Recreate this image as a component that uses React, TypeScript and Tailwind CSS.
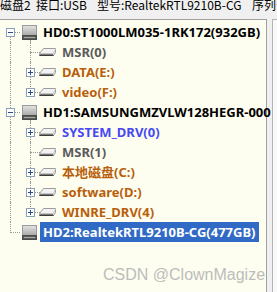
import type { ReactNode } from 'react'

type Line = 'full' | 'top' | 'bottom' | 'none'

type Row = {
  level: 0 | 1
  label: string
  color: string
  box?: '+' | '-'
  root: Line
  child?: Line
  down?: boolean
  selected?: boolean
}

const ORANGE = 'text-[#b85f0c]'
const GREY = 'text-[#5a5a5a]'

const ROWS: Row[] = [
  { level: 0, label: 'HD0:ST1000LM035-1RK172(932GB)', color: 'text-black', box: '-', root: 'bottom', down: true },
  { level: 1, label: 'MSR(0)', color: GREY, root: 'full', child: 'full' },
  { level: 1, label: 'DATA(E:)', color: ORANGE, box: '+', root: 'full', child: 'full' },
  { level: 1, label: 'video(F:)', color: ORANGE, box: '+', root: 'full', child: 'top' },
  { level: 0, label: 'HD1:SAMSUNGMZVLW128HEGR-000', color: 'text-black', box: '-', root: 'full', down: true },
  { level: 1, label: 'SYSTEM_DRV(0)', color: 'text-[#4848f0]', box: '+', root: 'full', child: 'full' },
  { level: 1, label: 'MSR(1)', color: GREY, root: 'full', child: 'full' },
  { level: 1, label: '本地磁盘(C:)', color: ORANGE, box: '+', root: 'full', child: 'full' },
  { level: 1, label: 'software(D:)', color: ORANGE, box: '+', root: 'full', child: 'full' },
  { level: 1, label: 'WINRE_DRV(4)', color: ORANGE, box: '+', root: 'full', child: 'top' },
  { level: 0, label: 'HD2:RealtekRTL9210B-CG(477GB)', color: 'text-black', root: 'top', selected: true },
]

const DOT = 'border-dotted border-[#9a9a9a]'

function ExpandBox({ sign }: { sign: '+' | '-' }) {
  return (
    <svg width="9" height="9" viewBox="0 0 9 9" className="absolute left-[6px] top-[6px]">
      <rect x="0.5" y="0.5" width="8" height="8" fill="#ffffff" stroke="#8ca0b8" />
      <line x1="2" y1="4.5" x2="7" y2="4.5" stroke="#2b4a8a" />
      {sign === '+' && <line x1="4.5" y1="2" x2="4.5" y2="7" stroke="#2b4a8a" />}
    </svg>
  )
}

function Gutter({ v, h, box }: { v: Line; h?: boolean; box?: '+' | '-' }) {
  return (
    <div className="relative w-5 h-5 shrink-0">
      {v === 'full' && <div className={`absolute left-[10px] top-0 bottom-0 border-l ${DOT}`} />}
      {v === 'top' && <div className={`absolute left-[10px] top-0 h-[11px] border-l ${DOT}`} />}
      {v === 'bottom' && <div className={`absolute left-[10px] top-[10px] bottom-0 border-l ${DOT}`} />}
      {h && <div className={`absolute left-[10px] right-0 top-[10px] border-t ${DOT}`} />}
      {box && <ExpandBox sign={box} />}
    </div>
  )
}

function DiskIcon() {
  return (
    <svg width="15" height="15" viewBox="0 0 15 15">
      <defs>
        <linearGradient id="dk" x1="0" y1="0" x2="0" y2="1">
          <stop offset="0" stopColor="#e4e4e4" />
          <stop offset="1" stopColor="#a9a9a9" />
        </linearGradient>
      </defs>
      <rect x="0.5" y="0.5" width="14" height="10" fill="url(#dk)" stroke="#9a9a9a" />
      <rect x="0.5" y="10.5" width="14" height="4" fill="#5e5e5e" stroke="#4a4a4a" />
      <line x1="2" y1="12.5" x2="13" y2="12.5" stroke="#a8a8a8" />
    </svg>
  )
}

function PartIcon() {
  return (
    <svg width="17" height="8" viewBox="0 0 17 8" className="-ml-[1px] shrink-0">
      <path d="M0.5 5.5 L4.5 0.5 L16.5 0.5 L16.5 4.5 L14.5 7.5 L0.5 7.5 Z" fill="#f2f2f2" stroke="#9c9c9c" />
      <path d="M0.5 5.5 L14.5 5.5 L16.5 1" fill="none" stroke="#c4c4c4" />
      <path d="M0.5 7.5 L14.5 7.5" stroke="#3c3c3c" />
      <rect x="1" y="6" width="13" height="1" fill="#7a7a7a" />
    </svg>
  )
}

function TreeRow({ r }: { r: Row }) {
  let icon: ReactNode
  if (r.level === 0) {
    icon = (
      <>
        <Gutter v={r.root} h box={r.box} />
        <div className="relative w-5 h-5 shrink-0 flex items-center pl-[2px]">
          <DiskIcon />
          {r.down && <div className={`absolute left-[10px] top-[18px] bottom-0 border-l ${DOT}`} />}
        </div>
      </>
    )
  } else {
    icon = (
      <>
        <Gutter v={r.root} />
        <Gutter v={r.child ?? 'none'} h box={r.box} />
        <PartIcon />
        <div className="w-[3px] shrink-0" />
      </>
    )
  }
  return (
    <div className="flex items-center h-5">
      {icon}
      <span
        className={`px-[3px] h-5 leading-5 whitespace-nowrap ${
          r.selected ? 'bg-[#316ac5] text-white' : r.color
        }`}
      >
        {r.label}
      </span>
    </div>
  )
}

export default function App() {
  return (
    <div className="relative w-[277px] h-[292px] overflow-hidden bg-[#f0f0f0] font-['Noto_Sans','Noto_Sans_CJK_SC',sans-serif]">
      <div className="h-[19px] overflow-hidden">
        <div className="flex -mt-[3px] text-[12px] leading-[16px] text-black whitespace-nowrap font-['Noto_Sans_CJK_SC',sans-serif]">
          <span className="w-[36px] shrink-0">磁盘2</span>
          <span className="w-[61px] shrink-0">接口:USB</span>
          <span className="w-[155px] shrink-0">型号:RealtekRTL9210B-CG</span>
          <span className="shrink-0">序列号</span>
        </div>
      </div>
      <div className="flex h-[273px] gap-[5px]">
        <div className="w-[267px] shrink-0 bg-[#fefef0] border-t border-r border-[#a0a0a0] pt-[2px] text-[13px] font-bold">
          {ROWS.map(r => (
            <TreeRow key={r.label} r={r} />
          ))}
        </div>
        <div className="flex-1 bg-[#f9f9f9] border-t border-l border-[#b4b4b4]" />
      </div>
      <span className="absolute left-[103px] top-[263px] text-[16px] text-[#bcbcbc] font-['Liberation_Sans',sans-serif] whitespace-nowrap">
        CSDN @ClownMagize
      </span>
    </div>
  )
}
